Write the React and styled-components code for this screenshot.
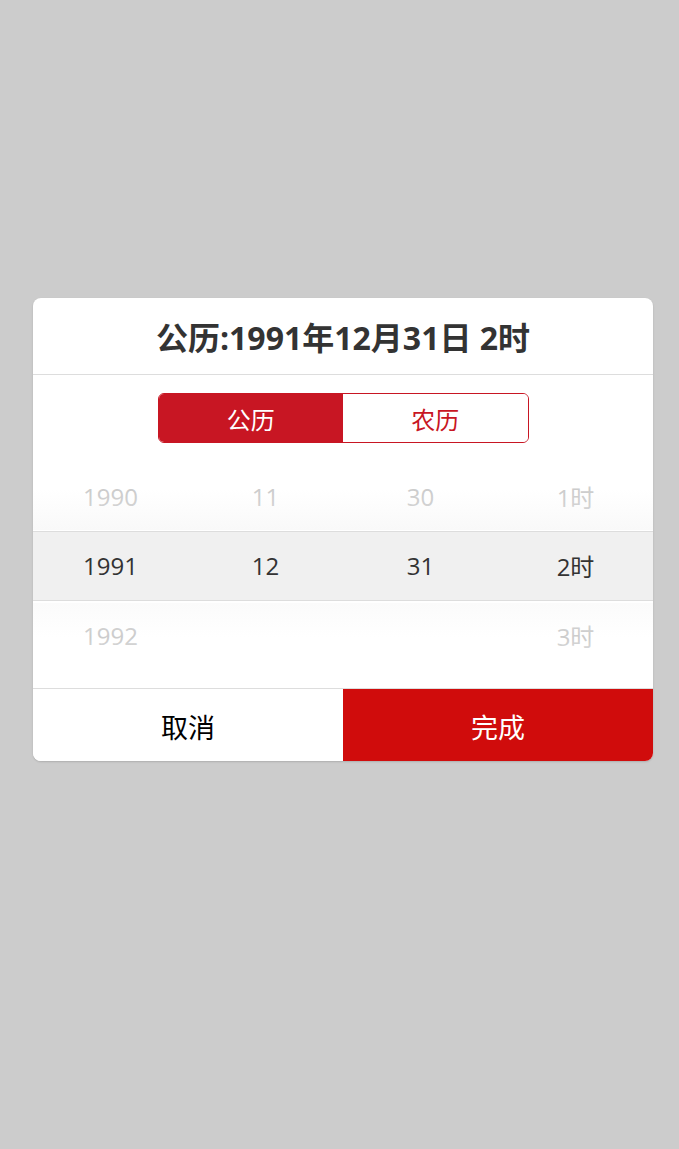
import React from 'react'
import styled, { createGlobalStyle } from 'styled-components'

const GlobalStyle = createGlobalStyle`
  html, body {
    margin: 0;
    padding: 0;
    background: #cccccc;
    font-family: "Open Sans", "Noto Sans CJK SC", sans-serif;
  }
`

const Page = styled.div`
  width: 679px;
  height: 1149px;
  display: flex;
  padding: 298px 0 0 33px;
  box-sizing: border-box;
`

const Dialog = styled.div`
  width: 620px;
  height: 463px;
  background: #fff;
  border-radius: 8px;
  overflow: hidden;
  display: flex;
  flex-direction: column;
  box-shadow: 0 1px 2px rgba(0, 0, 0, 0.15);
`

const Header = styled.div`
  height: 76px;
  display: flex;
  align-items: center;
  justify-content: center;
  border-bottom: 1px solid #dddddd;
  font-size: 32px;
  font-weight: 700;
  color: #333;
`

const SegmentWrap = styled.div`
  display: flex;
  justify-content: center;
  padding: 18px 0 19px;
`

const Segment = styled.div`
  width: 371px;
  height: 50px;
  display: flex;
  border: 1px solid #c81623;
  border-radius: 6px;
  overflow: hidden;
  box-sizing: border-box;
`

const SegItem = styled.div`
  flex: 1;
  display: flex;
  align-items: center;
  justify-content: center;
  font-size: 24px;
  background: ${p => (p.active ? '#c81623' : '#fff')};
  color: ${p => (p.active ? '#fff' : '#c81623')};
`

const Picker = styled.div`
  position: relative;
  height: 227px;
  display: flex;
  flex-direction: column;
  border-bottom: 1px solid #dddddd;
  box-sizing: border-box;
`

const Row = styled.div`
  height: 70px;
  display: grid;
  grid-template-columns: repeat(4, 1fr);
  align-items: center;
  background: ${p => (p.selected ? '#f0f0f0' : 'transparent')};
  border-top: ${p => (p.selected ? '1px solid #dddddd' : 'none')};
  border-bottom: ${p => (p.selected ? '1px solid #dddddd' : 'none')};
  color: ${p => (p.selected ? '#333' : '#cccccc')};
  font-size: 24px;
  margin-top: ${p => (p.selected ? '-1px' : '0')};
  padding-bottom: 2px;
  box-sizing: border-box;
`

const Cell = styled.div`
  text-align: center;
`

const FadeTop = styled.div`
  position: absolute;
  left: 0;
  right: 0;
  top: 0;
  height: 68px;
  background: linear-gradient(to bottom, rgba(255,255,255,0.6), rgba(255,255,255,0) 40%, rgba(240,240,240,0.4));
  pointer-events: none;
`

const FadeBottom = styled.div`
  position: absolute;
  left: 0;
  right: 0;
  top: 141px;
  bottom: 0;
  background: linear-gradient(to top, rgba(255,255,255,0.9), rgba(255,255,255,0) 60%, rgba(245,245,245,0.4));
  pointer-events: none;
`

const Footer = styled.div`
  display: flex;
  height: 72px;
`

const Button = styled.div`
  flex: 1;
  display: flex;
  align-items: center;
  justify-content: center;
  padding-top: 3px;
  font-size: 27px;
  background: ${p => (p.primary ? '#d00c0c' : '#fff')};
  color: ${p => (p.primary ? '#fff' : '#000')};
`

const rows = [
  ['1990', '11', '30', '1时'],
  ['1991', '12', '31', '2时'],
  ['1992', '', '', '3时'],
]

const App = () => {
  return (
    <Page>
      <GlobalStyle />
      <Dialog>
        <Header>公历:1991年12月31日 2时</Header>
        <SegmentWrap>
          <Segment>
            <SegItem active>公历</SegItem>
            <SegItem>农历</SegItem>
          </Segment>
        </SegmentWrap>
        <Picker>
          {rows.map((r, i) => (
            <Row key={i} selected={i === 1}>
              {r.map((c, j) => <Cell key={j}>{c}</Cell>)}
            </Row>
          ))}
          <FadeTop />
          <FadeBottom />
        </Picker>
        <Footer>
          <Button>取消</Button>
          <Button primary>完成</Button>
        </Footer>
      </Dialog>
    </Page>
  )
}

export default App
